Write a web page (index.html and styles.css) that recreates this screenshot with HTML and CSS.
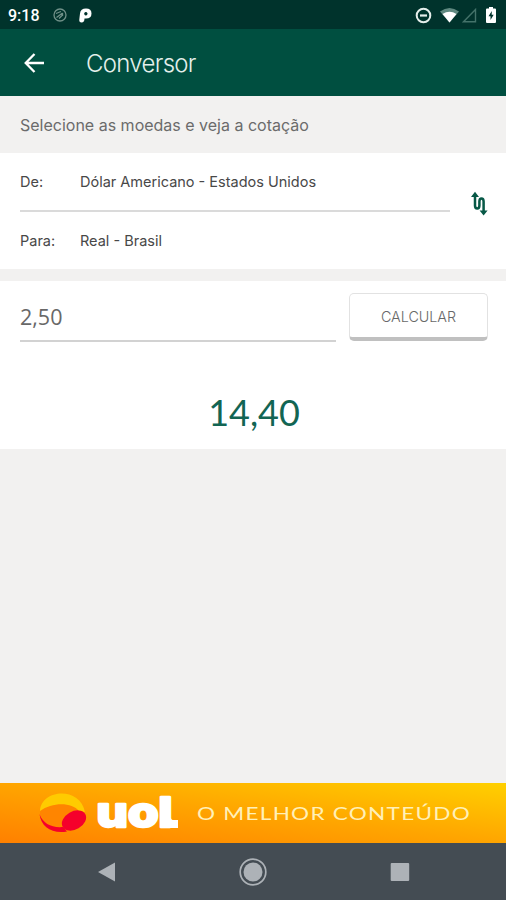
FILE: index.html
```html
<!DOCTYPE html>
<html lang="pt-BR">
<head>
    <meta charset="UTF-8">
    <meta name="viewport" content="width=device-width, initial-scale=1.0">
    <title>Conversor</title>
    <link rel="stylesheet" href="styles.css">
</head>
<body>
    <div class="status-bar">
        <span class="clock">9:18</span>
        <svg class="sync-icon" width="14" height="14" viewBox="0 0 14 14" fill="none" stroke="#6f9088" stroke-width="1.3">
            <circle cx="7" cy="7" r="6"/>
            <path d="M3 5.500L8 3.500M3.500 9.500L9.500 5M6 10.500L9 7.500M9.500 5v3"/>
        </svg>
        <svg class="p-icon" width="13" height="15" viewBox="0 0 13 15">
            <path fill="#fff" fill-rule="evenodd" d="M1 5.500Q1.500.5 7 .5q5.500 0 5.500 5T7 10.500l-1.500 0Q5.500 14.500 2.500 14.500 0 14.500.3 11.500zM6.800 4a1.700 1.700 0 1 0 .1 0z"/>
        </svg>
        <div class="status-right">
            <svg width="17" height="17" viewBox="0 0 17 17" fill="none" stroke="#e5eeeb">
                <circle cx="8.500" cy="8.500" r="6.800" stroke-width="2"/>
                <path d="M5 8.500h7" stroke-width="2.200"/>
            </svg>
            <svg class="wifi-icon" width="19" height="15" viewBox="0 0 19 15">
                <path fill="#5f8980" d="M0 3.500Q9.500-3.500 19 3.500L9.500 14.500z"/>
                <path fill="#fff" d="M2.500 6Q9.500 1.500 16.500 6l-7 8.500z"/>
            </svg>
            <svg class="signal-icon" width="15" height="15" viewBox="0 0 15 15">
                <path d="M1.500 13.700L13.500 1.500v12.200z" fill="none" stroke="#44736a" stroke-width="1.400"/>
            </svg>
            <svg class="battery-icon" width="10" height="16" viewBox="0 0 10 16">
                <path fill="#fff" d="M3 0h4v1.500h2q1 0 1 1V15q0 1-1 1H1q-1 0-1-1V2.500q0-1 1-1h2z"/>
                <path fill="#00332c" d="M5.800 4L2.500 9.300h2V13l3.200-5.200h-2z"/>
            </svg>
        </div>
    </div>

    <header class="toolbar">
        <svg class="back-icon" width="20" height="20" viewBox="0 0 20 20" fill="none" stroke="#fff" stroke-width="2.300">
            <path d="M10.500 1L1.700 10l8.800 9M2 10h18"/>
        </svg>
        <h1>Conversor</h1>
    </header>

    <p class="hint"><span>Selecione as moedas e veja a cotação</span></p>

    <section class="currencies">
        <div class="currency-list">
            <div class="currency-row from">
                <span class="label">De:</span>
                <span class="from-name">Dólar Americano - Estados Unidos</span>
            </div>
            <div class="currency-row to">
                <span class="label para">Para:</span>
                <span class="to-name">Real - Brasil</span>
            </div>
        </div>
        <svg class="swap-icon" width="18" height="26" viewBox="0 0 18 26">
            <path d="M5 5v9.500q0 3 2.200 3t2.200-3v-4q0-3 2.100-3t2.100 3V20" fill="none" stroke="#075846" stroke-width="2.500"/>
            <path fill="#075846" d="M5 .8L9 6H1zM13.600 24.500l-4-5h8z"/>
        </svg>
    </section>

    <section class="calc">
        <div class="calc-row">
            <div class="amount">2,50</div>
            <button class="calc-button"><span>CALCULAR</span></button>
        </div>
        <div class="result">14,40</div>
    </section>

    <div class="banner">
        <svg class="uol-logo" width="150" height="60" viewBox="0 0 150 60">
            <ellipse cx="24.500" cy="31" rx="22.500" ry="17.500" fill="#ff8500"/>
            <path fill="#ffcb00" d="M2 28C3 6 42 3 47 29c-2 0-4-1-6-1C34 19 14 19 2 28z"/>
            <path fill="#f5002b" d="M1.500 31C5 41 14 45 25 44l4 4.500C14 51 3 44 1.500 31z"/>
            <ellipse cx="36" cy="37.500" rx="13" ry="9" transform="rotate(-30 36 37.500)" fill="#f5002b"/>
            <text class="uol-text" x="58.500" y="43.500" textLength="76" lengthAdjust="spacingAndGlyphs">uol</text>
            <path fill="#fff" d="M124 35h9q0 2 3 2h4v8h-8q-7 0-8-5z"/>
        </svg>
        <svg class="slogan" width="274" height="24" viewBox="0 0 274 24">
            <text class="slogan-text" x="0" y="18.500" textLength="274" lengthAdjust="spacingAndGlyphs">O MELHOR CONTEÚDO</text>
        </svg>
    </div>

    <nav class="nav-bar">
        <svg width="30" height="30" viewBox="0 0 30 30"><path fill="#adb2b7" d="M7 15L24 5.500v19z"/></svg>
        <svg width="30" height="30" viewBox="0 0 30 30">
            <circle cx="15" cy="15" r="12.800" fill="none" stroke="#adb2b7" stroke-width="1.700"/>
            <circle cx="15" cy="15" r="9.500" fill="#adb2b7"/>
        </svg>
        <svg width="30" height="30" viewBox="0 0 30 30"><rect x="5.700" y="6" width="18.500" height="18" rx="1" fill="#adb2b7"/></svg>
    </nav>
</body>
</html>
```
FILE: styles.css
```css
* {
    box-sizing: border-box;
}

body {
    margin: 0;
    height: 900px;
    display: flex;
    flex-direction: column;
    background-color: #f2f1f0;
    font-family: Inter, Arial, sans-serif;
    overflow: hidden;
}

svg {
    display: block;
    flex-shrink: 0;
}

.status-bar {
    height: 29px;
    padding: 1px 10px 0 8px;
    display: flex;
    align-items: center;
    background-color: #00332c;
    color: #fff;
    font-family: Roboto, sans-serif;
}

.clock {
    width: 45px;
    font-size: 16px;
    font-weight: 500;
}

.p-icon {
    margin-left: 12px;
}

.status-right {
    display: flex;
    align-items: center;
    margin-left: auto;
}

.wifi-icon {
    margin-left: 8px;
}

.signal-icon {
    margin-left: 3px;
}

.battery-icon {
    margin-left: 9px;
}

.toolbar {
    height: 67px;
    padding-left: 24px;
    display: flex;
    align-items: center;
    gap: 42px;
    background-color: #004f40;
    color: #e4efeb;
}

h1 {
    margin: 2px 0 0;
    font-size: 24px;
    font-weight: 300;
    letter-spacing: -0.7px;
}

.hint {
    height: 57px;
    margin: 0;
    padding: 0 0 0 20px;
    display: flex;
    align-items: center;
    color: #6b6b6b;
    font-size: 16px;
}

/* Currency selection */
.currencies {
    height: 116px;
    padding: 0 18px 0 20px;
    display: flex;
    justify-content: space-between;
    background-color: #fff;
    color: #484848;
    font-size: 14.5px;
}

.currency-list {
    width: 430px;
}

.currency-row {
    height: 58px;
    display: flex;
    align-items: center;
}

.from {
    height: 59px;
    border-bottom: 2px solid #dadada;
}

.to {
    height: 57px;
}

.label {
    width: 60px;
}

.swap-icon {
    margin-top: 38px;
}

/* Amount and result */
.calc {
    height: 168px;
    margin-top: 12px;
    padding: 12px 18px 0 20px;
    background-color: #fff;
}

.calc-row {
    display: flex;
    justify-content: space-between;
}

.amount {
    width: 316px;
    height: 49px;
    border-bottom: 2px solid #d2d2d2;
    color: #686868;
    font-family: "Open Sans", sans-serif;
    font-size: 21.5px;
    line-height: 47px;
}

.calc-button {
    width: 139px;
    height: 48px;
    padding: 2px 0 0;
    border: 1px solid #e2e2e2;
    border-bottom: 4px solid #c0c0c0;
    border-radius: 5px;
    background-color: #fff;
    color: #686868;
    font-family: Inter, Arial, sans-serif;
    font-size: 14.3px;
    font-weight: 300;
}

.result {
    margin-top: 46px;
    color: #126553;
    font-family: Lato, sans-serif;
    font-size: 36px;
    line-height: 48px;
    text-align: center;
}

/* Ad banner */
.banner {
    height: 60px;
    margin-top: auto;
    padding: 0 35px 0 38px;
    display: flex;
    align-items: center;
    background: linear-gradient(to top right, #ff8000 0%, #ffa500 50%, #ffd000 100%);
}

.slogan {
    margin-left: 9px;
}

.uol-text {
    fill: #fff;
    stroke: #fff;
    stroke-width: 2.5px;
    stroke-linejoin: round;
    font-family: Inter, sans-serif;
    font-size: 41px;
    font-weight: 800;
}

.slogan-text {
    fill: #fff0b8;
    font-family: Lato, sans-serif;
    font-size: 18px;
    letter-spacing: 1px;
}

.nav-bar {
    height: 57px;
    padding: 0 91px;
    display: flex;
    align-items: center;
    justify-content: space-between;
    background-color: #444c53;
}
```
